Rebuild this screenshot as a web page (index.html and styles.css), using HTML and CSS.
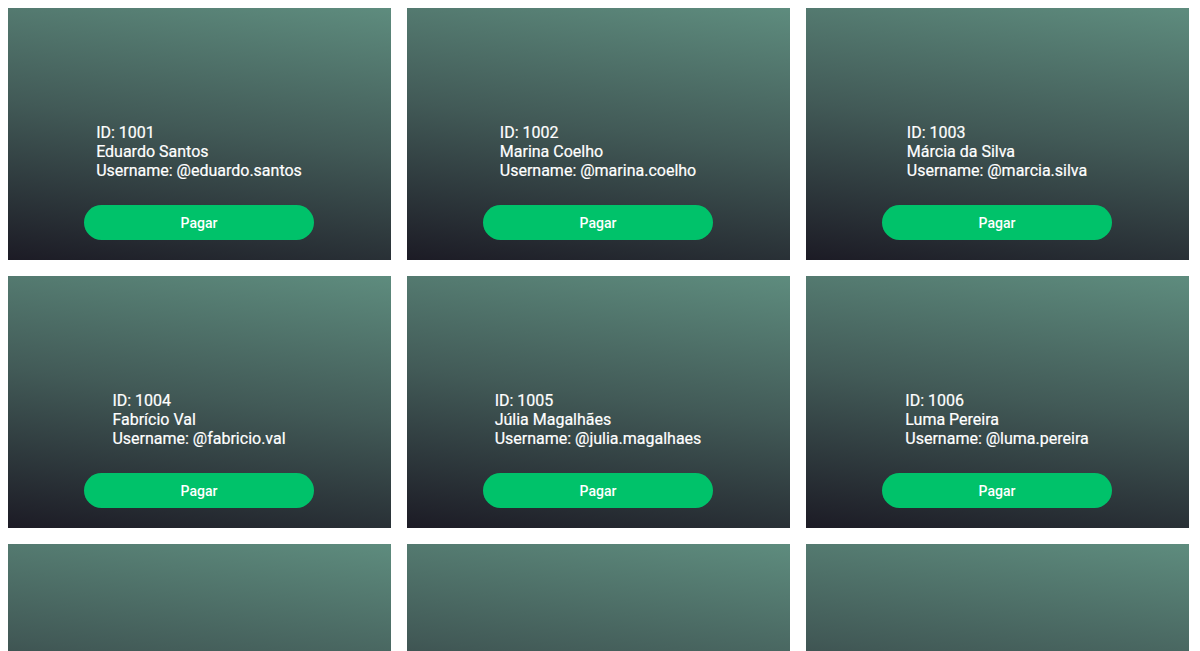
FILE: index.html
```html
<!DOCTYPE html>
<html lang="pt-BR">
<head>
<meta charset="utf-8">
<title>Usuários</title>
<link rel="stylesheet" href="styles.css">
</head>
<body>
<div class="grid">
  <div class="card">
    <div class="info"><div>ID: 1001</div><div>Eduardo Santos</div><div>Username: @eduardo.santos</div></div>
    <button class="pay">Pagar</button>
  </div>
  <div class="card">
    <div class="info"><div>ID: 1002</div><div>Marina Coelho</div><div>Username: @marina.coelho</div></div>
    <button class="pay">Pagar</button>
  </div>
  <div class="card">
    <div class="info"><div>ID: 1003</div><div>Márcia da Silva</div><div>Username: @marcia.silva</div></div>
    <button class="pay">Pagar</button>
  </div>
  <div class="card">
    <div class="info"><div>ID: 1004</div><div>Fabrício Val</div><div>Username: @fabricio.val</div></div>
    <button class="pay">Pagar</button>
  </div>
  <div class="card">
    <div class="info"><div>ID: 1005</div><div>Júlia Magalhães</div><div>Username: @julia.magalhaes</div></div>
    <button class="pay">Pagar</button>
  </div>
  <div class="card">
    <div class="info"><div>ID: 1006</div><div>Luma Pereira</div><div>Username: @luma.pereira</div></div>
    <button class="pay">Pagar</button>
  </div>
  <div class="card">
    <div class="info"><div>ID: 1007</div><div>Carlos Lima</div><div>Username: @carlos.lima</div></div>
    <button class="pay">Pagar</button>
  </div>
  <div class="card">
    <div class="info"><div>ID: 1008</div><div>Renata Alves</div><div>Username: @renata.alves</div></div>
    <button class="pay">Pagar</button>
  </div>
  <div class="card">
    <div class="info"><div>ID: 1009</div><div>Pedro Rocha</div><div>Username: @pedro.rocha</div></div>
    <button class="pay">Pagar</button>
  </div>
</div>
</body>
</html>
```

FILE: styles.css
```css
html, body {
  background: #ffffff;
}
body {
  margin: 8px;
  font-family: Roboto, "Liberation Sans", Arial, sans-serif;
}
.grid {
  display: grid;
  grid-template-columns: repeat(3, 383px);
  gap: 16px;
}
.card {
  height: 252px;
  box-sizing: border-box;
  padding-bottom: 20px;
  display: flex;
  flex-direction: column;
  justify-content: flex-end;
  align-items: center;
  background: linear-gradient(188deg, #5e8c7e 0%, #425a57 48%, #1c1b25 100%);
}
.info {
  color: #ffffff;
  font-size: 16px;
  line-height: 19px;
  margin-bottom: 25px;
  margin-right: 1px;
  -webkit-text-stroke: 0.2px #ffffff;
}
.pay {
  width: 230px;
  height: 35px;
  margin-right: 1px;
  border: none;
  border-radius: 18px;
  background: #00c26a;
  color: #ffffff;
  font-family: Roboto, "Liberation Sans", Arial, sans-serif;
  font-size: 14px;
  font-weight: 500;
  padding: 0;
  cursor: pointer;
}
```
